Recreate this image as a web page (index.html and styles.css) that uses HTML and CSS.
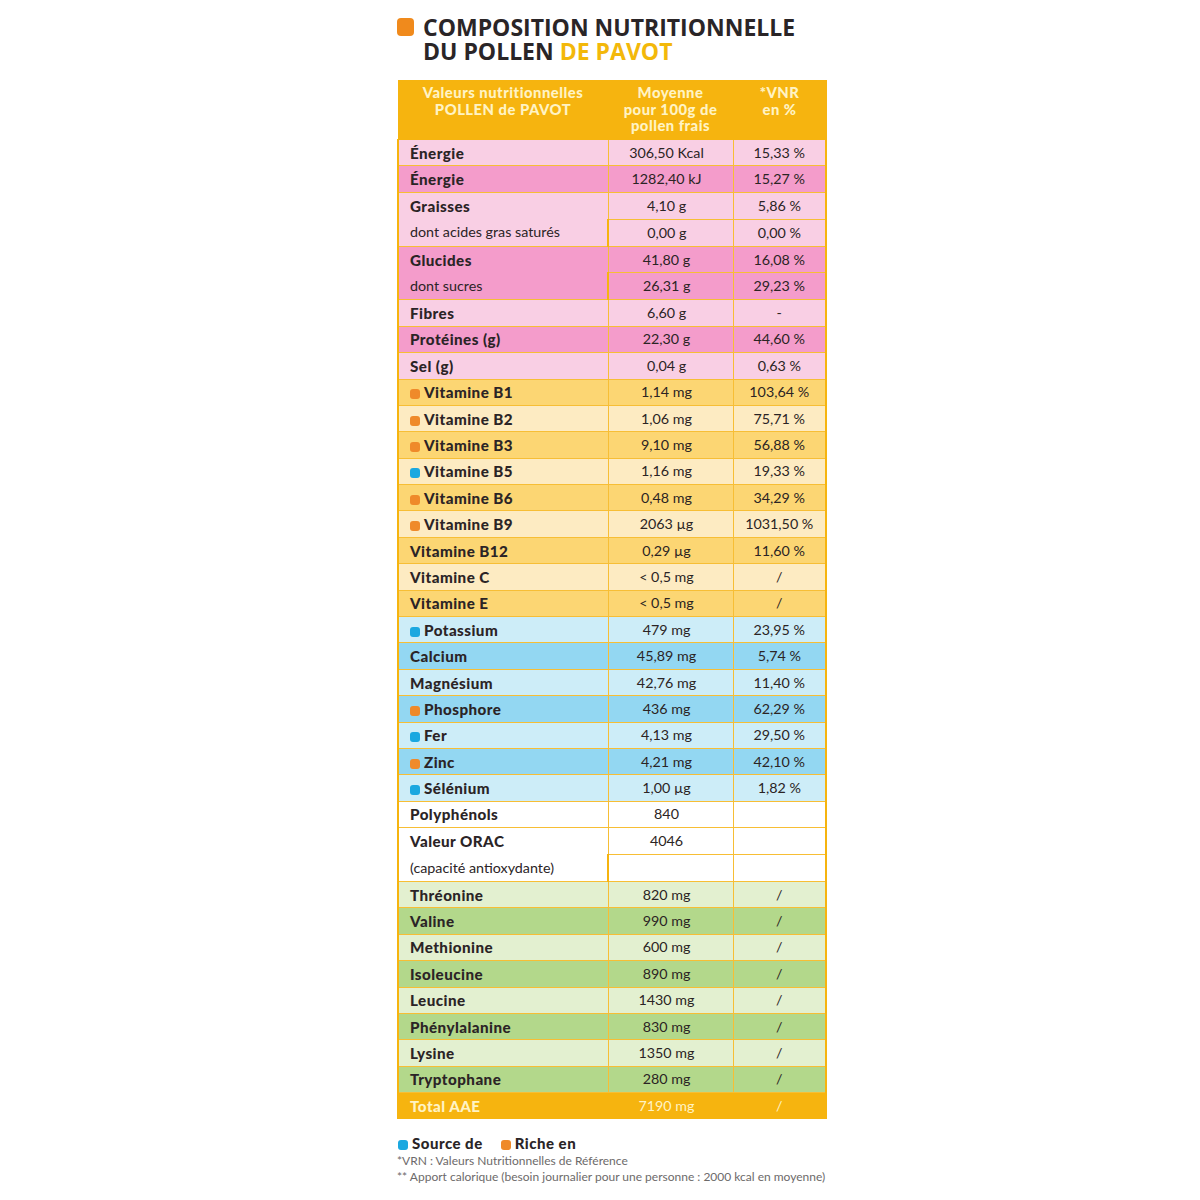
FILE: index.html
```html
<!DOCTYPE html>
<html lang="fr">
<head>
<meta charset="utf-8">
<link rel="stylesheet" href="styles.css">
</head>
<body>
<div class="page">
  <h1 class="title">
    <span class="title-mark"></span>
    <span class="title-text">COMPOSITION NUTRITIONNELLE<br>DU POLLEN <span class="title-accent">DE PAVOT</span></span>
  </h1>
  <table class="nutri">
    <colgroup><col class="c1"><col class="c2"><col class="c3"></colgroup>
    <thead>
      <tr class="head">
        <th>Valeurs nutritionnelles<br>POLLEN de PAVOT</th>
        <th>Moyenne<br>pour 100g de<br>pollen frais</th>
        <th>*VNR<br>en %</th>
      </tr>
    </thead>
    <tbody>
      <tr class="pk1"><td class="lb">Énergie</td><td>306,50 Kcal</td><td>15,33 %</td></tr>
      <tr class="pk2"><td class="lb">Énergie</td><td>1282,40 kJ</td><td>15,27 %</td></tr>
      <tr class="pk1"><td class="lb grp" rowspan="2"><div>Graisses</div><div class="sub">dont acides gras saturés</div></td><td>4,10 g</td><td>5,86 %</td></tr>
      <tr class="pk1"><td>0,00 g</td><td>0,00 %</td></tr>
      <tr class="pk2"><td class="lb grp" rowspan="2"><div>Glucides</div><div class="sub">dont sucres</div></td><td>41,80 g</td><td>16,08 %</td></tr>
      <tr class="pk2"><td>26,31 g</td><td>29,23 %</td></tr>
      <tr class="pk1"><td class="lb">Fibres</td><td>6,60 g</td><td>-</td></tr>
      <tr class="pk2"><td class="lb">Protéines (g)</td><td>22,30 g</td><td>44,60 %</td></tr>
      <tr class="pk1"><td class="lb">Sel (g)</td><td>0,04 g</td><td>0,63 %</td></tr>
      <tr class="ye2"><td class="lb"><span class="dot or"></span>Vitamine B1</td><td>1,14 mg</td><td>103,64 %</td></tr>
      <tr class="ye1"><td class="lb"><span class="dot or"></span>Vitamine B2</td><td>1,06 mg</td><td>75,71 %</td></tr>
      <tr class="ye2"><td class="lb"><span class="dot or"></span>Vitamine B3</td><td>9,10 mg</td><td>56,88 %</td></tr>
      <tr class="ye1"><td class="lb"><span class="dot bl"></span>Vitamine B5</td><td>1,16 mg</td><td>19,33 %</td></tr>
      <tr class="ye2"><td class="lb"><span class="dot or"></span>Vitamine B6</td><td>0,48 mg</td><td>34,29 %</td></tr>
      <tr class="ye1"><td class="lb"><span class="dot or"></span>Vitamine B9</td><td>2063 µg</td><td>1031,50 %</td></tr>
      <tr class="ye2"><td class="lb">Vitamine B12</td><td>0,29 µg</td><td>11,60 %</td></tr>
      <tr class="ye1"><td class="lb">Vitamine C</td><td>&lt; 0,5 mg</td><td>/</td></tr>
      <tr class="ye2"><td class="lb">Vitamine E</td><td>&lt; 0,5 mg</td><td>/</td></tr>
      <tr class="bu1"><td class="lb"><span class="dot bl"></span>Potassium</td><td>479 mg</td><td>23,95 %</td></tr>
      <tr class="bu2"><td class="lb">Calcium</td><td>45,89 mg</td><td>5,74 %</td></tr>
      <tr class="bu1"><td class="lb">Magnésium</td><td>42,76 mg</td><td>11,40 %</td></tr>
      <tr class="bu2"><td class="lb"><span class="dot or"></span>Phosphore</td><td>436 mg</td><td>62,29 %</td></tr>
      <tr class="bu1"><td class="lb"><span class="dot bl"></span>Fer</td><td>4,13 mg</td><td>29,50 %</td></tr>
      <tr class="bu2"><td class="lb"><span class="dot or"></span>Zinc</td><td>4,21 mg</td><td>42,10 %</td></tr>
      <tr class="bu1"><td class="lb"><span class="dot bl"></span>Sélénium</td><td>1,00 µg</td><td>1,82 %</td></tr>
      <tr class="wh"><td class="lb">Polyphénols</td><td>840</td><td></td></tr>
      <tr class="wh"><td class="lb grp" rowspan="2"><div>Valeur ORAC</div><div class="sub">(capacité antioxydante)</div></td><td>4046</td><td></td></tr>
      <tr class="wh"><td></td><td></td></tr>
      <tr class="gr1"><td class="lb">Thréonine</td><td>820 mg</td><td>/</td></tr>
      <tr class="gr2"><td class="lb">Valine</td><td>990 mg</td><td>/</td></tr>
      <tr class="gr1"><td class="lb">Methionine</td><td>600 mg</td><td>/</td></tr>
      <tr class="gr2"><td class="lb">Isoleucine</td><td>890 mg</td><td>/</td></tr>
      <tr class="gr1"><td class="lb">Leucine</td><td>1430 mg</td><td>/</td></tr>
      <tr class="gr2"><td class="lb">Phénylalanine</td><td>830 mg</td><td>/</td></tr>
      <tr class="gr1"><td class="lb">Lysine</td><td>1350 mg</td><td>/</td></tr>
      <tr class="gr2"><td class="lb">Tryptophane</td><td>280 mg</td><td>/</td></tr>
      <tr class="total"><td class="lb">Total AAE</td><td>7190 mg</td><td>/</td></tr>
    </tbody>
  </table>
  <div class="legend">
    <span class="leg-item"><span class="dot bl"></span>Source de</span>
    <span class="leg-item"><span class="dot or"></span>Riche en</span>
  </div>
  <div class="notes">
    <p class="note">*VRN : Valeurs Nutritionnelles de Référence</p>
    <p class="note">** Apport calorique (besoin journalier pour une personne : 2000 kcal en moyenne)</p>
  </div>
</div>
</body>
</html>
```

FILE: styles.css
```css
* { box-sizing: border-box; }
html, body { margin: 0; padding: 0; background: #fff; }
body { font-family: Lato, "Open Sans", "DejaVu Sans", sans-serif; color: #2b2424; }

.page {
  width: 440px;
  margin-left: 397px;
  padding-top: 14px;
}

.title {
  display: flex;
  align-items: flex-start;
  gap: 9px;
  margin: 0 0 17px 0;
  font-family: "Open Sans", "Liberation Sans", sans-serif;
  font-weight: 700;
  font-size: 23px;
  line-height: 24px;
  color: #2a2527;
  letter-spacing: 0;
}
.title-text { padding-top: 1px; }
.title-mark {
  flex: none;
  width: 17px;
  height: 18px;
  margin-top: 4px;
  border-radius: 4px;
  background: #f08a1c;
}
.title-accent { color: #f3b80a; }

.nutri {
  width: 428px;
  border-collapse: collapse;
  table-layout: fixed;
  font-size: 14.3px;
}
.nutri col.c1 { width: 210px; }
.nutri col.c2 { width: 125px; }
.nutri col.c3 { width: 93px; }

.nutri th, .nutri td {
  border: 1.5px solid #f7be35;
  padding: 0;
  text-align: center;
  vertical-align: middle;
  height: 26.4px;
  line-height: 16px;
}
.nutri tbody td:nth-last-child(2) { padding-right: 8px; }
.nutri thead th {
  background: #f6b40f;
  color: #fff3c4;
  font-weight: 900;
  font-size: 14.8px;
  letter-spacing: 0.5px;
  line-height: 16.5px;
  height: 59px;
  vertical-align: top;
  padding-top: 3px;
  border-color: #f6b40f;
}

.nutri td.lb {
  text-align: left;
  padding-left: 11px;
  padding-right: 0;
  font-weight: 900;
  font-size: 15.2px;
  letter-spacing: 0.45px;
  color: #2b2426;
}
.nutri td.grp { padding: 0; }
.nutri td.grp div {
  height: 26.4px;
  line-height: 26.4px;
  padding-left: 11px;
}
.nutri td.grp div.sub { font-weight: 400; font-size: 14.3px; letter-spacing: 0; }

.nutri tbody tr > td:first-child { border-left: 2px solid #f6b40f; }
.nutri tbody tr > td:last-child { border-right: 2px solid #f6b40f; }

.pk1 td { background: #f9cfe4; }
.pk2 td { background: #f49ccb; }
.ye1 td { background: #fdebc2; }
.ye2 td { background: #fcd673; }
.bu1 td { background: #cdedf8; }
.bu2 td { background: #93d7f2; }
.wh td { background: #ffffff; }
.gr1 td { background: #e3f0d0; }
.gr2 td { background: #b3d88b; }
.nutri .total td {
  background: #f6b40f;
  color: #fff3c4;
  border-color: #f6b40f;
}

.dot {
  display: inline-block;
  width: 10px;
  height: 10px;
  border-radius: 3px;
  margin-right: 4px;
  vertical-align: -1px;
}
.dot.or { background: #ef8a2a; }
.dot.bl { background: #1ba8e0; }

.legend {
  margin-top: 16px;
  display: flex;
  gap: 18px;
  font-weight: 900;
  font-size: 15px;
  letter-spacing: 0.5px;
  line-height: 17px;
  color: #2a2527;
  padding-left: 1px;
}
.legend .dot { margin-right: 4px; }

.notes { margin-top: 1px; }
.note {
  margin: 0;
  font-size: 12px;
  line-height: 16px;
  color: #6d6a6a;
}
```
